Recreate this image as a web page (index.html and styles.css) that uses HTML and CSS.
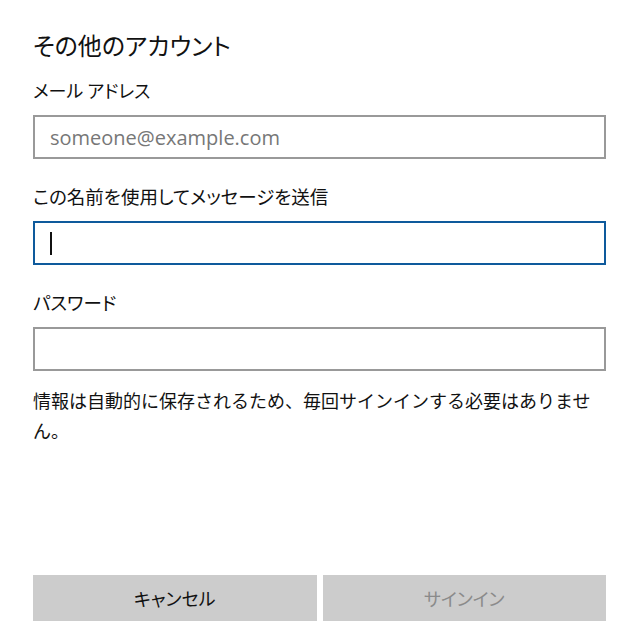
FILE: index.html
```html
<!DOCTYPE html>
<html lang="ja">
<head>
<meta charset="utf-8">
<title>その他のアカウント</title>
<link rel="stylesheet" href="styles.css">
</head>
<body>
<div class="page">
  <h1 class="title">その他のアカウント</h1>
  <div class="label first">メール アドレス</div>
  <div class="field"><span class="placeholder">someone@example.com</span></div>
  <div class="label">この名前を使用してメッセージを送信</div>
  <div class="field focused"><span class="caret"></span></div>
  <div class="label">パスワード</div>
  <div class="field"></div>
  <p class="info">情報は自動的に保存されるため、毎回サインインする必要はありません。</p>
  <div class="buttons">
    <div class="btn">キャンセル</div>
    <div class="btn disabled">サインイン</div>
  </div>
</div>
</body>
</html>
```
FILE: styles.css
```css
html, body {
  margin: 0;
  padding: 0;
  background: #ffffff;
}
body {
  font-family: "Noto Sans CJK JP", "Noto Sans", sans-serif;
  color: #111111;
}
.page {
  box-sizing: border-box;
  height: 640px;
  padding: 30px 34px 19px 33px;
  display: flex;
  flex-direction: column;
}
.title {
  margin: 0;
  font-size: 24px;
  font-weight: 400;
  line-height: 30px;
  height: 30px;
  font-feature-settings: "palt";
  color: #111;
}
.label {
  font-size: 18.5px;
  line-height: 24px;
  height: 24px;
  margin-top: 25px;
  font-feature-settings: "palt";
}
.label.first {
  margin-top: 18px;
  font-size: 18px;
}
.field {
  box-sizing: border-box;
  height: 44px;
  margin-top: 13px;
  border: 2px solid #999999;
  background: #fff;
  display: flex;
  align-items: center;
  padding-left: 15px;
}
.field.focused {
  border-color: #0e5a9c;
}
.placeholder {
  font-family: "Open Sans", sans-serif;
  font-size: 20px;
  color: #777777;
}
.caret {
  width: 2px;
  height: 23px;
  background: #111;
}
.info {
  margin: 14px 0 0 0;
  font-size: 18px;
  line-height: 30px;
}
.buttons {
  margin-top: auto;
  display: grid;
  grid-template-columns: 1fr 1fr;
  gap: 6px;
}
.btn {
  height: 46px;
  background: #cccccc;
  display: flex;
  align-items: center;
  justify-content: center;
  font-size: 18px;
  font-feature-settings: "palt";
  color: #111;
}
.btn.disabled {
  color: #8a8a8a;
}
```
